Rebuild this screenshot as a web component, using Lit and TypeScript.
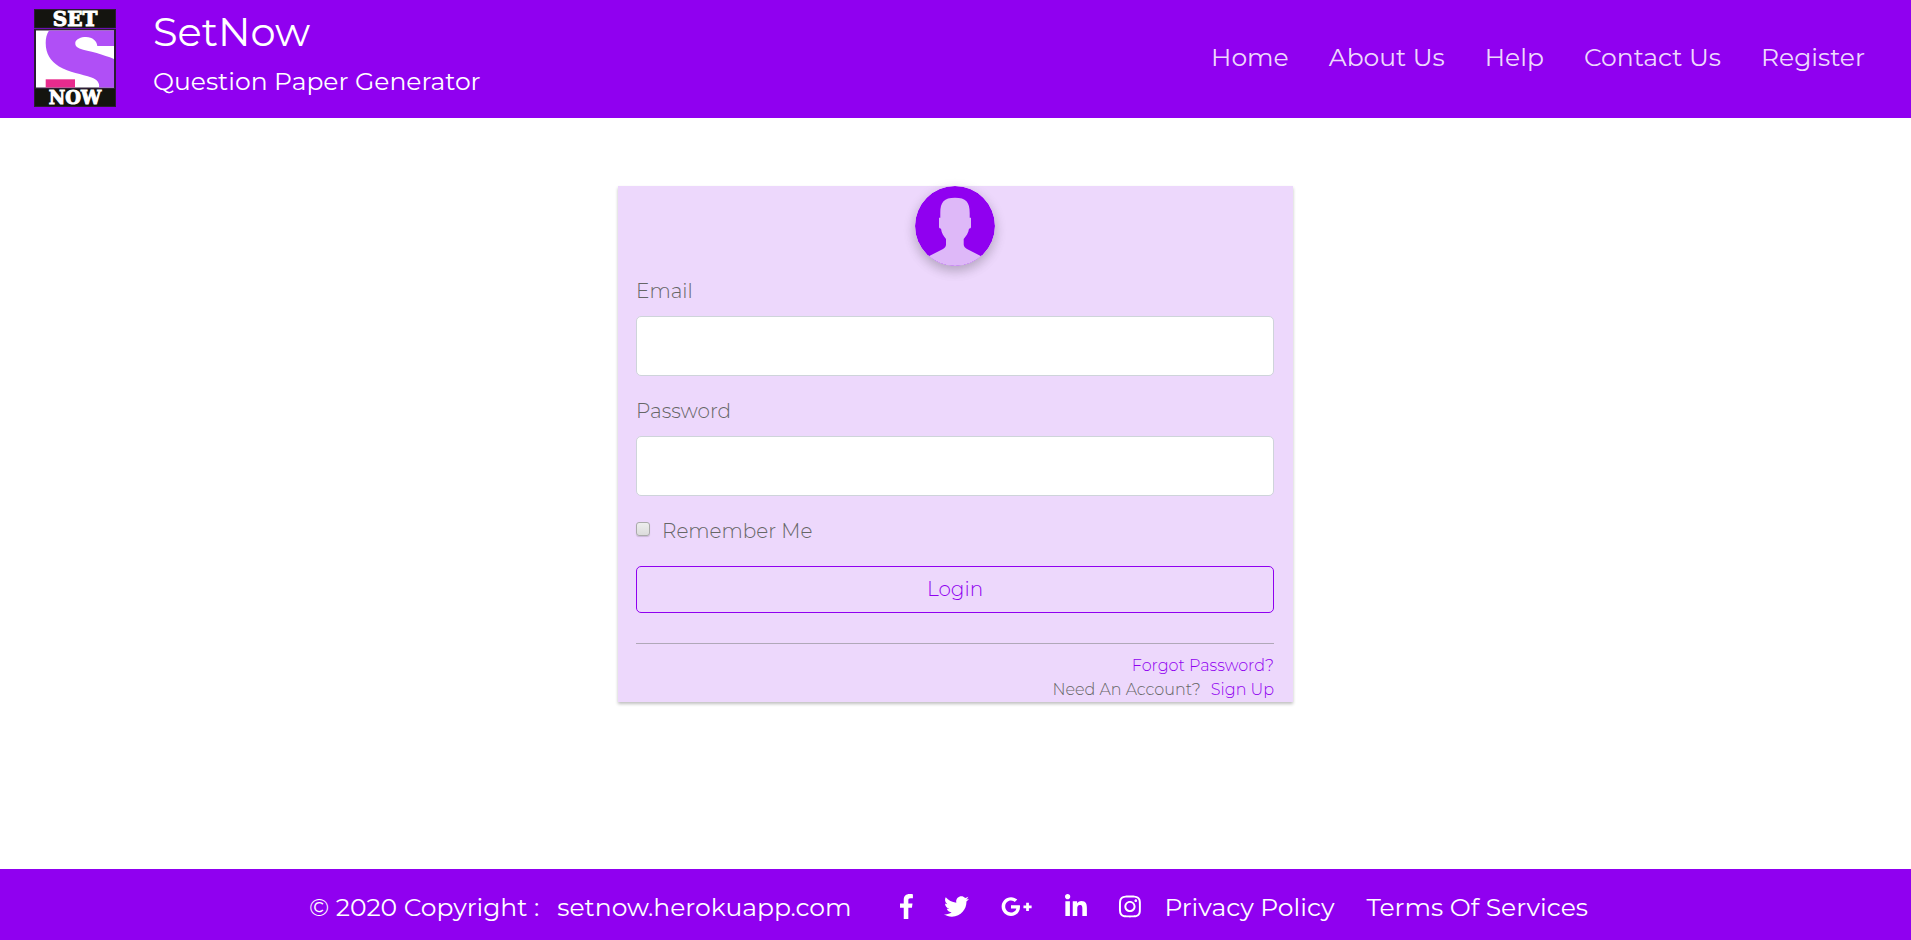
import { LitElement, html, css, svg } from "lit";
import { customElement } from "lit/decorators.js";

interface Social {
  name: string;
  width: number;
  path: string;
}

const NAV = ["Home", "About Us", "Help", "Contact Us", "Register"];

const SOCIALS: Social[] = [
  {
    name: "Facebook",
    width: 264,
    path: "M76.7 512V283H0v-91h76.7v-71.7C76.7 42.4 124.3 0 193.8 0c33.3 0 61.9 2.5 70.2 3.6V85h-48.2c-37.8 0-45.1 18-45.1 44.3V192H256l-11.7 91h-73.6v229",
  },
  {
    name: "Twitter",
    width: 512,
    path: "M459.37 151.716c.325 4.548.325 9.097.325 13.645 0 138.72-105.583 298.558-298.558 298.558-59.452 0-114.68-17.219-161.137-47.106 8.447.974 16.568 1.299 25.34 1.299 49.055 0 94.213-16.568 130.274-44.832-46.132-.975-84.792-31.188-98.112-72.772 6.498.974 12.995 1.624 19.818 1.624 9.421 0 18.843-1.3 27.614-3.573-48.081-9.747-84.143-51.98-84.143-102.985v-1.299c13.969 7.797 30.214 12.67 47.431 13.319-28.264-18.843-46.781-51.005-46.781-87.391 0-19.492 5.197-37.36 14.294-52.954 51.655 63.675 129.3 105.258 216.365 109.807-1.624-7.797-2.599-15.918-2.599-24.04 0-57.828 46.782-104.934 104.934-104.934 30.213 0 57.502 12.67 76.67 33.137 23.715-4.548 46.456-13.32 66.599-25.34-7.798 24.366-24.366 44.833-46.132 57.827 21.117-2.273 41.584-8.122 60.426-16.243-14.292 20.791-32.161 39.308-52.628 54.253z",
  },
  {
    name: "Google Plus",
    width: 640,
    path: "M386.061 228.496c1.834 9.692 3.143 19.384 3.143 31.956C389.204 370.205 315.599 448 204.8 448c-106.084 0-192-85.915-192-192s85.916-192 192-192c51.864 0 95.083 18.859 128.611 50.292l-52.126 50.03c-14.145-13.621-39.028-29.599-76.485-29.599-65.484 0-118.92 54.221-118.92 121.277 0 67.056 53.436 121.277 118.92 121.277 75.961 0 104.513-54.745 108.965-82.773H204.8v-66.009h181.261zm185.406 6.437V179.2h-56.001v55.733h-55.733v56.001h55.733v55.733h56.001v-55.733H627.2v-56.001h-55.733z",
  },
  {
    name: "LinkedIn",
    width: 448,
    path: "M100.3 448H7.4V148.9h92.9V448zM53.8 108.1C24.1 108.1 0 83.5 0 53.8S24.1 0 53.8 0s53.8 24.1 53.8 53.8-24.1 54.3-53.8 54.3zM448 448h-92.7V302.4c0-34.7-.7-79.2-48.3-79.2-48.3 0-55.7 37.7-55.7 76.7V448h-92.8V148.9h89.1v40.8h1.3c12.4-23.5 42.7-48.3 87.9-48.3 94 0 111.3 61.9 111.3 142.3V448z",
  },
  {
    name: "Instagram",
    width: 448,
    path: "M224.1 141c-63.6 0-114.9 51.3-114.9 114.9s51.3 114.9 114.9 114.9S339 319.5 339 255.9 287.7 141 224.1 141zm0 189.6c-41.1 0-74.7-33.5-74.7-74.7s33.5-74.7 74.7-74.7 74.7 33.5 74.7 74.7-33.6 74.7-74.7 74.7zm146.4-194.3c0 14.9-12 26.8-26.8 26.8-14.9 0-26.8-12-26.8-26.8s12-26.8 26.8-26.8 26.8 12 26.8 26.8zm76.1 27.2c-1.7-35.9-9.9-67.7-36.2-93.9-26.2-26.2-58-34.4-93.9-36.2-37-2.1-147.9-2.1-184.9 0-35.8 1.7-67.6 9.9-93.9 36.1s-34.4 58-36.2 93.9c-2.1 37-2.1 147.9 0 184.9 1.7 35.9 9.9 67.7 36.2 93.9s58 34.4 93.9 36.2c37 2.1 147.9 2.1 184.9 0 35.9-1.7 67.7-9.9 93.9-36.2 26.2-26.2 34.4-58 36.2-93.9 2.1-37 2.1-147.8 0-184.8zM398.8 388c-7.8 19.6-22.9 34.7-42.6 42.6-29.5 11.7-99.5 9-132.1 9s-102.7 2.6-132.1-9c-19.6-7.8-34.7-22.9-42.6-42.6-11.7-29.5-9-99.5-9-132.1s-2.6-102.7 9-132.1c7.8-19.6 22.9-34.7 42.6-42.6 29.5-11.7 99.5-9 132.1-9s102.7-2.6 132.1 9c19.6 7.8 34.7 22.9 42.6 42.6 11.7 29.5 9 99.5 9 132.1s2.7 102.7-9 132.1z",
  },
];

const logo = svg`
  <svg class="logo" viewBox="0 0 82 98" role="img" aria-label="SetNow logo">
    <rect width="82" height="98" fill="#2b1d33"/>
    <rect x="1" y="1" width="80" height="17.5" fill="#14140f"/>
    <rect x="0" y="19" width="82" height="1" fill="#6a10b0"/>
    <rect x="1" y="80" width="80" height="17" fill="#14140f"/>
    <rect x="2" y="21.5" width="78" height="57" fill="#fff"/>
    <path fill="#b04ff6" d="M15 21.5C12.500 25.500 11.700 29.500 11.700 34C11.700 45 16.500 52 25 57.500C35 63.500 48 65 57.500 68.500C63 70.500 66 74 65 78.500H80V50C74.500 47.700 69 46 62.700 44C56 42.200 50 41.500 45.500 39.500C42 38 41 36 41.300 33.500C42 30 47 28 52 28C58.500 28 63 32 63.300 37H80V21.500Z"/>
    <rect x="11.700" y="70.300" width="29.300" height="8.200" fill="#e82b8d"/>
    <text x="41" y="17" class="logo-text">SET</text>
    <text x="41" y="95" class="logo-text logo-text-low">NOW</text>
  </svg>`;

const avatar = svg`
  <svg class="avatar" viewBox="0 0 80 80" aria-hidden="true">
    <defs><clipPath id="disc"><circle cx="40" cy="40" r="40"/></clipPath></defs>
    <g clip-path="url(#disc)">
      <rect width="80" height="80" fill="#9000f0"/>
      <path fill="#deb8f8" d="M40 11.700C51 11.700 54.700 16 54.700 27V31.700H56V41C56 42.200 55 42.500 54 42.700C53.500 47 51 50 48.700 53V58.500C48.700 60.500 50 61.500 52 63L65.700 70L72 80H8L14.300 70L28 63C30 61.500 31 60.500 31 58.500V53C28.700 50 26.500 47 26 42.700C25 42.500 24 42.200 24 41V31.700H25.300V27C25.300 16 29 11.700 40 11.700Z"/>
    </g>
  </svg>`;

@customElement("app-root")
export class AppRoot extends LitElement {
  static styles = css`
    :host {
      display: flex;
      flex-direction: column;
      min-height: 100vh;
      background: #fff;
      color: #666;
      font-family: Montserrat, Inter, sans-serif;
      font-size: 20px;
      font-weight: 300;
      line-height: 30px;
    }
    *, *::before, *::after { box-sizing: border-box; }
    a { color: inherit; text-decoration: none; }

    .bar {
      display: flex;
      align-items: center;
      background: #9000f0;
      color: #fff;
      font-size: 25px;
      font-weight: 400;
    }
    .header {
      flex-wrap: wrap;
      justify-content: space-between;
      min-height: 118px;
      padding: 9px 46px 11px 34px;
    }
    .brand { display: flex; gap: 37px; }
    .logo { width: 82px; height: 98px; flex: none; overflow: visible; }
    .logo-text {
      font-family: "DejaVu Serif", serif;
      font-size: 20px;
      font-weight: 700;
      line-height: 20px;
      text-anchor: middle;
      fill: #fff;
      stroke: #fff;
      stroke-width: 1px;
    }
    .logo-text-low { font-size: 18px; }
    .name { margin: 0; font-size: 40px; font-weight: 400; line-height: 46px; }
    .tagline { margin: 10px 0 0; line-height: 32px; }
    .nav { display: flex; flex-wrap: wrap; gap: 40px; margin-bottom: 2px; color: rgba(255, 255, 255, 0.87); }

    .main { flex: 1; display: flex; justify-content: center; align-items: flex-start; padding: 68px 16px; }
    .card {
      display: flex;
      flex-direction: column;
      width: 100%;
      max-width: 675px;
      padding: 0 19px 0 18px;
      background: #edd8fc;
      box-shadow: 0 2px 3px rgba(0, 0, 0, 0.25);
    }
    .avatar {
      align-self: center;
      width: 80px;
      height: 80px;
      margin-bottom: 10px;
      border-radius: 50%;
      box-shadow: 0 5px 11px rgba(0, 0, 0, 0.18), 0 4px 15px rgba(0, 0, 0, 0.08);
    }
    .field { display: flex; flex-direction: column; gap: 10px; margin-bottom: 20px; }
    .input {
      width: 100%;
      height: 60px;
      padding: 8px 12px;
      border: 1px solid #ced4da;
      border-radius: 5px;
      background: #fff;
      font: inherit;
    }
    .remember { display: flex; align-items: center; gap: 12px; }
    .check {
      appearance: none;
      width: 14px;
      height: 14px;
      margin: 0 0 4px;
      border: 1px solid #aaa;
      border-radius: 3px;
      background: linear-gradient(#eee, #dcdcdc);
      box-shadow: 0 1px 1px rgba(0, 0, 0, 0.15);
    }
    .check:checked { background: #9000f0; }
    .login {
      height: 47px;
      margin-top: 20px;
      padding: 0 12px 2px;
      border: 1px solid #9000f0;
      border-radius: 5px;
      background: transparent;
      color: #9000f0;
      font: inherit;
    }
    .rule { width: 100%; height: 1px; margin: 30px 0 10px; border: 0; background: #b0a8b8; }
    .help { display: flex; flex-direction: column; align-items: flex-end; font-size: 16px; line-height: 24px; }
    .signup { display: flex; gap: 10px; }
    .accent { color: #9000f0; }

    .footer { flex-wrap: wrap; justify-content: center; min-height: 71px; padding: 11px 30px 7px 16px; }
    .copy { display: flex; gap: 18px; }
    .socials { display: flex; gap: 32px; margin: 0 24px 0 48px; }
    .social { display: flex; }
    .glyph { height: 25px; fill: #fff; overflow: visible; }
    .legal { display: flex; gap: 32px; }
  `;

  render() {
    return html`
      <header class="bar header">
        <div class="brand">
          ${logo}
          <div>
            <h1 class="name">SetNow</h1>
            <p class="tagline">Question Paper Generator</p>
          </div>
        </div>
        <nav class="nav">${NAV.map((item) => html`<a href="#">${item}</a>`)}</nav>
      </header>

      <main class="main">
        <form class="card" @submit=${(e: Event) => e.preventDefault()}>
          ${avatar}
          <div class="field">
            <label for="email">Email</label>
            <input class="input" id="email" type="email" />
          </div>
          <div class="field">
            <label for="password">Password</label>
            <input class="input" id="password" type="password" />
          </div>
          <div class="remember">
            <input class="check" id="remember" type="checkbox" />
            <label for="remember">Remember Me</label>
          </div>
          <button class="login" type="submit">Login</button>
          <hr class="rule" />
          <div class="help">
            <a class="accent" href="#">Forgot Password?</a>
            <div class="signup"><span>Need An Account?</span><a class="accent" href="#">Sign Up</a></div>
          </div>
        </form>
      </main>

      <footer class="bar footer">
        <div class="copy"><span>© 2020 Copyright :</span><a href="#">setnow.herokuapp.com</a></div>
        <div class="socials">
          ${SOCIALS.map(
            (s) => html`<a class="social" href="#" aria-label=${s.name}>
              <svg class="glyph" viewBox="0 0 ${s.width} 512" aria-hidden="true"><path d=${s.path} /></svg>
            </a>`
          )}
        </div>
        <div class="legal"><a href="#">Privacy Policy</a><a href="#">Terms Of Services</a></div>
      </footer>
    `;
  }
}
